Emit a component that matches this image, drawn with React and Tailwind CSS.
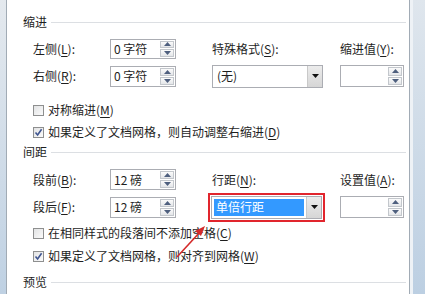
const font = { fontFamily: '"Noto Sans CJK SC", "Microsoft YaHei", sans-serif' };

function Acc({ pre, k, post = "):" }) {
  return (
    <span>
      {pre}(<span className="underline underline-offset-2">{k}</span>{post}
    </span>
  );
}

function Heading({ text }) {
  return (
    <div className="flex h-[14px] items-center pl-[16px] pr-[3px]">
      <span className="leading-none">{text}</span>
      <div className="ml-[4px] h-px flex-1 bg-[#dcdfe3]" />
    </div>
  );
}

function Tri({ down, color = "#4e5f7e" }) {
  return (
    <svg width="7" height="4" viewBox="0 0 7 4">
      <polygon points={down ? "0,0 7,0 3.5,4" : "0,4 7,4 3.5,0"} fill={color} />
    </svg>
  );
}

function Spinner() {
  return (
    <div className="flex h-full w-[15px] flex-col gap-px py-px pr-px">
      <div className="flex flex-1 items-center justify-center border border-[#c3c7cc] bg-gradient-to-b from-[#fbfbfb] to-[#e4e6e9]">
        <Tri />
      </div>
      <div className="flex flex-1 items-center justify-center border border-[#c3c7cc] bg-gradient-to-b from-[#fbfbfb] to-[#e4e6e9]">
        <Tri down />
      </div>
    </div>
  );
}

function SpinInput({ value, w = "w-[66px]", h = "h-[20px]" }) {
  return (
    <div className={`flex ${w} ${h} items-center border border-[#abadb3] bg-white`}>
      <span className="flex-1 pl-[3px] leading-none">{value}</span>
      <Spinner />
    </div>
  );
}

function Dropdown({ value, selected }) {
  return (
    <div className="flex h-[23px] w-[111px] border border-[#abadb3] bg-white">
      <div className="flex flex-1 items-center p-[2px]">
        {selected ? (
          <div className="flex h-full w-full items-center bg-[#3399ff] pl-[2px] text-white">{value}</div>
        ) : (
          <span className="pl-[2px]">{value}</span>
        )}
      </div>
      <div className="flex w-[15px] items-center justify-center border-l border-[#c9c9c9] bg-gradient-to-b from-[#ececec] to-[#d6d6d6]">
        <Tri down color="#111" />
      </div>
    </div>
  );
}

function Check({ checked, children }) {
  return (
    <div className="flex h-[20px] items-center pl-[26px]">
      <div className="flex h-[11px] w-[11px] items-center justify-center border border-[#8e8f8f] bg-gradient-to-br from-[#e2e3e4] to-[#fbfbfb]">
        {checked && (
          <svg width="9" height="9" viewBox="0 0 9 9">
            <path d="M1.5 4.5 L3.6 7 L7.6 1.2" stroke="#3f5590" strokeWidth="1.6" fill="none" />
          </svg>
        )}
      </div>
      <span className="ml-[4px] leading-none">{children}</span>
    </div>
  );
}

export default function App() {
  return (
    <div className="relative flex h-[294px] w-[425px] overflow-hidden text-[12px] text-[#1e1e1e]" style={font}>
      <div className="w-[6px] bg-gradient-to-b from-[#e4e9ee] to-[#bfd1e3]" />

      <div className="flex w-[404px] flex-col border-x border-[#a1abb5] bg-white pt-[15px]">
        <Heading text="缩进" />

        <div className="mt-[9px] flex h-[21px] items-center pl-[26px]">
          <div className="w-[77px] leading-none"><Acc pre="左侧" k="L" /></div>
          <SpinInput value="0 字符" />
          <div className="w-[36px]" />
          <div className="w-[128px] leading-none"><Acc pre="特殊格式" k="S" /></div>
          <div className="leading-none"><Acc pre="缩进值" k="Y" /></div>
        </div>

        <div className="mt-[5px] flex h-[24px] items-center pl-[26px]">
          <div className="w-[77px] leading-none"><Acc pre="右侧" k="R" /></div>
          <SpinInput value="0 字符" h="h-[21px]" />
          <div className="w-[36px]" />
          <div className="w-[128px]"><Dropdown value="(无)" /></div>
          <SpinInput value="" w="w-[64px]" h="h-[22px]" />
        </div>

        <div className="mt-[12px]">
          <Check><Acc pre="对称缩进" k="M" post=")" /></Check>
        </div>
        <div className="mt-[2px]">
          <Check checked><Acc pre="如果定义了文档网格，则自动调整右缩进" k="D" post=")" /></Check>
        </div>

        <div className="mt-[3px]">
          <Heading text="间距" />
        </div>

        <div className="mt-[10px] flex h-[21px] items-center pl-[26px]">
          <div className="w-[77px] leading-none"><Acc pre="段前" k="B" /></div>
          <SpinInput value="12 磅" h="h-[21px]" />
          <div className="w-[36px]" />
          <div className="w-[128px] leading-none"><Acc pre="行距" k="N" /></div>
          <div className="leading-none"><Acc pre="设置值" k="A" /></div>
        </div>

        <div className="mt-[5px] flex h-[24px] items-center pl-[26px]">
          <div className="w-[77px] leading-none"><Acc pre="段后" k="F" /></div>
          <SpinInput value="12 磅" h="h-[21px]" />
          <div className="w-[35px]" />
          <div className="w-[129px]">
            <div className="relative inline-block">
              <Dropdown value="单倍行距" selected />
              <div className="absolute -inset-[3px] border-2 border-[#e1252d]" />
            </div>
          </div>
          <SpinInput value="" w="w-[64px]" h="h-[22px]" />
        </div>

        <div className="mt-[4px]">
          <Check><Acc pre="在相同样式的段落间不添加空格" k="C" post=")" /></Check>
        </div>
        <div className="mt-[3px]">
          <Check checked><Acc pre="如果定义了文档网格，则对齐到网格" k="W" post=")" /></Check>
        </div>

        <div className="mt-[9px]">
          <Heading text="预览" />
        </div>
      </div>

      <div className="flex w-[15px]">
        <div className="w-[3px] bg-[#eef2f6]" />
        <div className="flex-1 bg-gradient-to-b from-[#dfe6ed] to-[#bccfe2]" />
      </div>

      <svg className="pointer-events-none absolute left-0 top-0" width="425" height="294">
        <line x1="177" y1="257" x2="200" y2="232" stroke="#d42a2a" strokeWidth="1.6" />
        <polygon points="205,226 195,231 201,236" fill="#d42a2a" />
      </svg>
    </div>
  );
}
